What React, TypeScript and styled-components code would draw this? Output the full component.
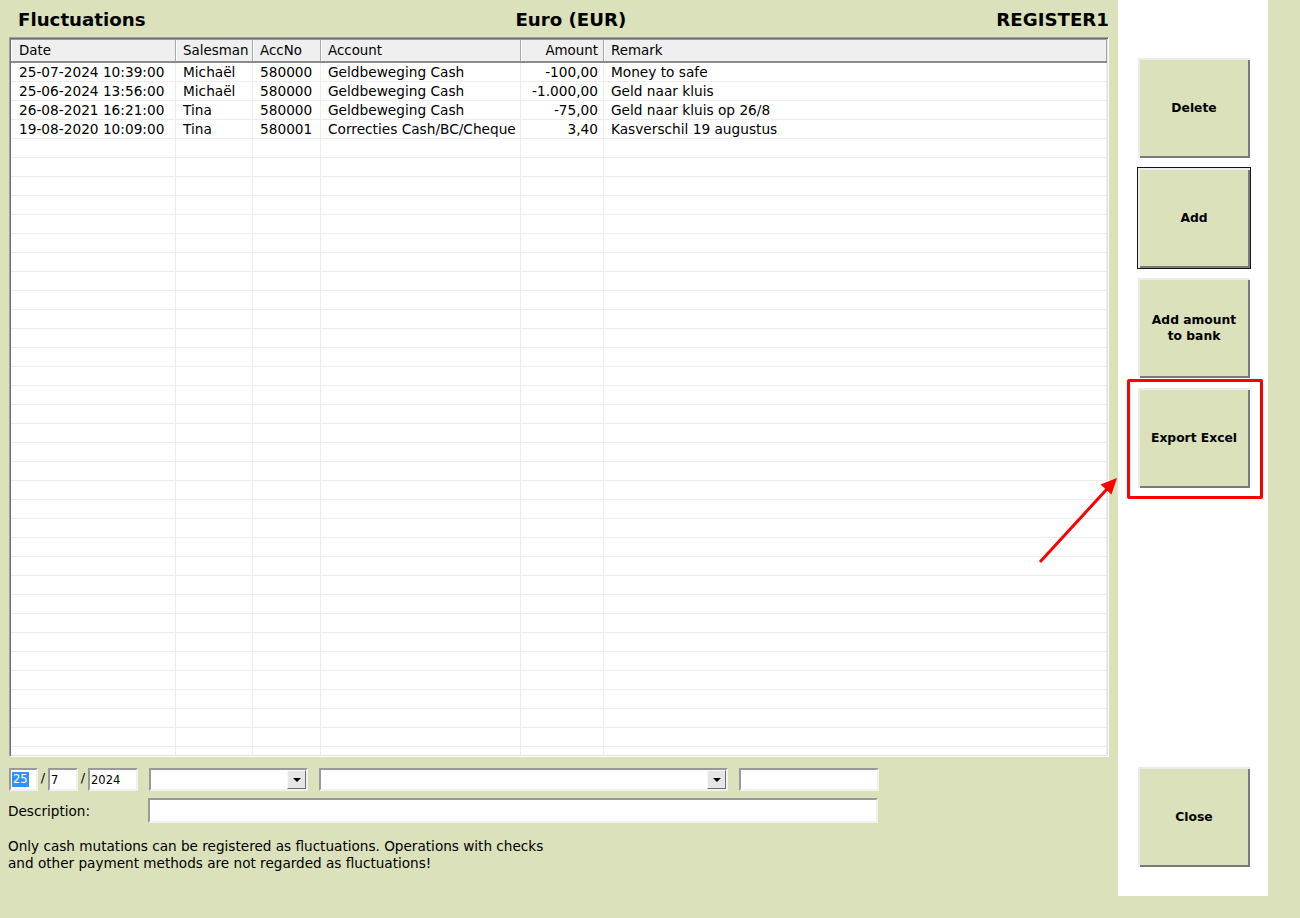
import React from 'react';
import styled, { createGlobalStyle } from 'styled-components';

const GlobalStyle = createGlobalStyle`
  html, body {
    margin: 0;
    padding: 0;
    background: #dbe1ba;
  }
  body {
    font-family: 'DejaVu Sans', 'Noto Sans', sans-serif;
    color: #000;
  }
`;

const Screen = styled.div`
  position: relative;
  display: flex;
  width: 1300px;
  height: 918px;
  background: #dbe1ba;
  overflow: hidden;
`;

const Main = styled.div`
  width: 1100px;
  padding-left: 9px;
  padding-right: 9px;
  display: flex;
  flex-direction: column;
`;

const TitleBar = styled.div`
  height: 37px;
  padding-left: 9px;
  display: flex;
  align-items: center;
  justify-content: space-between;
`;

const TitleText = styled.div`
  font-size: 18.2px;
  font-weight: 700;
  white-space: nowrap;
  padding-top: 2px;
`;

const Grid = styled.div`
  box-sizing: border-box;
  height: 720px;
  border: 1px solid;
  border-color: #a0a0a0 #ffffff #ffffff #a0a0a0;
  box-shadow: inset 1px 1px 0 #6f6f6f, inset -1px -1px 0 #e3e3e3;
  background: #fff;
  padding: 1px;
  overflow: hidden;
`;

const Row = styled.div`
  display: grid;
  grid-template-columns: 165px 77px 68px 200px 83px 1fr;
`;

const HeaderRow = styled(Row)`
  height: 21px;
  background: #efefef;
  border-top: 1px solid #9a9a9a;
  border-bottom: 2px solid #8c8c8c;
`;

const HeadCell = styled.div<{ $right?: boolean }>`
  font-size: 13.4px;
  line-height: 21px;
  padding: 0 5px 0 6px;
  text-align: ${(p) => (p.$right ? 'right' : 'left')};
  border-right: 1px solid #a8a8a8;
  border-left: 1px solid #fdfdfd;
  white-space: nowrap;
  overflow: hidden;
  &:first-child {
    padding-left: 7px;
  }
`;

const BodyRow = styled(Row)`
  height: 18px;
  border-bottom: 1px solid #ececec;
`;

const Cell = styled.div<{ $right?: boolean }>`
  font-size: 13.7px;
  line-height: 18px;
  padding: 0 5px 0 7px;
  text-align: ${(p) => (p.$right ? 'right' : 'left')};
  border-right: 1px solid #ececec;
  white-space: nowrap;
  overflow: hidden;
  &:first-child {
    padding-left: 8px;
  }
`;

const FormRow = styled.div`
  display: flex;
  align-items: center;
  margin-top: 11px;
  height: 23px;
`;

const DescRow = styled.div`
  display: flex;
  align-items: center;
  margin-top: 7px;
  height: 25px;
`;

const Field = styled.div<{ $w: number; $gap?: number }>`
  box-sizing: border-box;
  width: ${(p) => p.$w}px;
  height: 100%;
  margin-left: ${(p) => p.$gap ?? 0}px;
  background: #fff;
  border: 2px solid;
  border-color: #9a9a9a #f1f1f1 #f1f1f1 #9a9a9a;
  display: flex;
  align-items: center;
  font-size: 11.5px;
  padding-left: 1px;
`;

const Selected = styled.span`
  background: #3390ff;
  color: #fff;
  padding: 0 1px;
  line-height: 15px;
`;

const Slash = styled.div`
  width: 10px;
  text-align: center;
  font-size: 13px;
  padding-bottom: 4px;
`;

const DropButton = styled.div`
  margin-left: auto;
  width: 19px;
  height: 19px;
  box-sizing: border-box;
  background: #e6e6e6;
  border: 1px solid;
  border-color: #f8f8f8 #6f6f6f #6f6f6f #f8f8f8;
  display: flex;
  align-items: center;
  justify-content: center;
`;

const Caret = styled.div`
  width: 0;
  height: 0;
  border-left: 4px solid transparent;
  border-right: 4px solid transparent;
  border-top: 4px solid #000;
`;

const Label = styled.div`
  width: 140px;
  font-size: 13.6px;
  margin-left: -1px;
`;

const Note = styled.div`
  margin-top: 15px;
  margin-left: -1px;
  font-size: 13.6px;
  line-height: 17px;
`;

const Side = styled.div`
  width: 150px;
  height: 896px;
  background: #fff;
  box-sizing: border-box;
  padding: 58px 0 29px 20px;
  display: flex;
  flex-direction: column;
  gap: 10px;
`;

const Button = styled.div<{ $focused?: boolean }>`
  position: relative;
  box-sizing: border-box;
  width: 112px;
  height: 100px;
  flex-shrink: 0;
  background: #dbe1ba;
  display: flex;
  align-items: center;
  justify-content: center;
  text-align: center;
  font-size: 12.3px;
  font-weight: 700;
  line-height: 16px;
  box-shadow: ${(p) =>
    p.$focused
      ? '0 0 0 1px #1c1414, inset 2px 2px 0 #ececec, inset -2px -2px 0 #7a7a7a'
      : 'inset 2px 2px 0 #ececec, inset -2px -2px 0 #7a7a7a'};
`;

const CloseButton = styled(Button)`
  margin-top: auto;
`;

const Highlight = styled.div`
  position: absolute;
  left: -11px;
  top: -9px;
  right: -13px;
  bottom: -11px;
  border: 3px solid #ff0000;
  border-radius: 2px;
`;

const Arrow = styled.svg`
  position: absolute;
  left: 1030px;
  top: 470px;
`;

const rows = [
  ['25-07-2024 10:39:00', 'Michaël', '580000', 'Geldbeweging Cash', '-100,00', 'Money to safe'],
  ['25-06-2024 13:56:00', 'Michaël', '580000', 'Geldbeweging Cash', '-1.000,00', 'Geld naar kluis'],
  ['26-08-2021 16:21:00', 'Tina', '580000', 'Geldbeweging Cash', '-75,00', 'Geld naar kluis op 26/8'],
  ['19-08-2020 10:09:00', 'Tina', '580001', 'Correcties Cash/BC/Cheque', '3,40', 'Kasverschil 19 augustus'],
];

const headers = ['Date', 'Salesman', 'AccNo', 'Account', 'Amount', 'Remark'];

const App: React.FC = () => {
  const filled = [...rows, ...Array.from({ length: 34 }, () => ['', '', '', '', '', ''])];
  return (
    <Screen>
      <GlobalStyle />
      <Main>
        <TitleBar>
          <TitleText>Fluctuations</TitleText>
          <TitleText>Euro (EUR)</TitleText>
          <TitleText>REGISTER1</TitleText>
        </TitleBar>
        <Grid>
          <HeaderRow>
            {headers.map((h, i) => (
              <HeadCell key={h} $right={i === 4}>
                {h}
              </HeadCell>
            ))}
          </HeaderRow>
          {filled.map((r, ri) => (
            <BodyRow key={ri}>
              {r.map((c, ci) => (
                <Cell key={ci} $right={ci === 4}>
                  {c}
                </Cell>
              ))}
            </BodyRow>
          ))}
        </Grid>
        <FormRow>
          <Field $w={29}>
            <Selected>25</Selected>
          </Field>
          <Slash>/</Slash>
          <Field $w={30}>7</Field>
          <Slash>/</Slash>
          <Field $w={50}>2024</Field>
          <Field $w={159} $gap={11}>
            <DropButton>
              <Caret />
            </DropButton>
          </Field>
          <Field $w={409} $gap={11}>
            <DropButton>
              <Caret />
            </DropButton>
          </Field>
          <Field $w={140} $gap={11} />
        </FormRow>
        <DescRow>
          <Label>Description:</Label>
          <Field $w={730} />
        </DescRow>
        <Note>
          Only cash mutations can be registered as fluctuations. Operations with checks
          <br />
          and other payment methods are not regarded as fluctuations!
        </Note>
      </Main>
      <Side>
        <Button>Delete</Button>
        <Button $focused>Add</Button>
        <Button>
          Add amount
          <br />
          to bank
        </Button>
        <Button>
          Export Excel
          <Highlight />
        </Button>
        <CloseButton>Close</CloseButton>
      </Side>
      <Arrow width="95" height="100" viewBox="0 0 95 100">
        <line x1="10" y1="92" x2="77" y2="19" stroke="#ff0000" strokeWidth="3" />
        <polygon points="87,8 81.5,24.5 70.5,14.5" fill="#ff0000" />
      </Arrow>
    </Screen>
  );
};

export default App;
